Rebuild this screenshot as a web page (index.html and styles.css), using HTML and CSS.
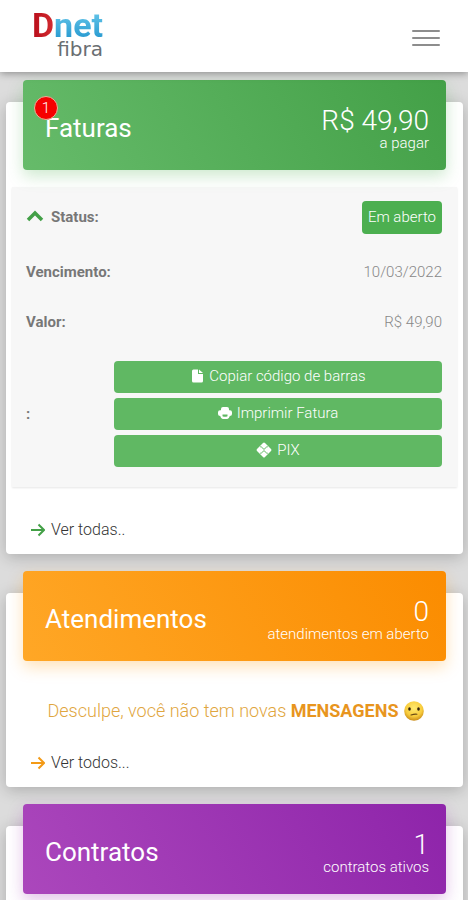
FILE: index.html
```html
<!DOCTYPE html>
<html lang="pt-BR">
<head>
<meta charset="utf-8">
<meta name="viewport" content="width=device-width, initial-scale=1">
<title>Dnet fibra</title>
<link rel="stylesheet" href="styles.css">
</head>
<body>
<header class="topbar">
  <a class="logo" href="#"><span class="logo-main"><span class="logo-d">D</span><span class="logo-net">net</span></span><span class="logo-sub">fibra</span></a>
  <button class="menu" type="button" aria-label="Menu"><span></span><span></span><span></span></button>
</header>
<main class="cards">
  <section class="card">
    <div class="card-head green">
      <div class="title-wrap"><span class="count">1</span><h2>Faturas</h2></div>
      <p class="summary"><span class="big">R$ 49,90</span><span class="small">a pagar</span></p>
    </div>
    <div class="panel">
      <table class="details">
        <tr class="first"><th scope="row"><svg class="chevron" viewBox="0 0 18 12" aria-hidden="true"><path d="M2 10 9 3l7 7"/></svg>Status:</th><td><span class="status">Em aberto</span></td></tr>
        <tr><th scope="row">Vencimento:</th><td>10/03/2022</td></tr>
        <tr><th scope="row">Valor:</th><td>R$ 49,90</td></tr>
        <tr><th scope="row">:</th><td>
          <div class="actions">
            <button type="button"><svg viewBox="0 0 14 14" aria-hidden="true"><path d="M2 2Q2 .5 3.500 .5H8V5h5v7q0 1.500-1.500 1.500h-8Q2 13.500 2 12z"/><path d="M9 .5 13 4H9z"/></svg>Copiar código de barras</button>
            <button type="button"><svg viewBox="0 0 14 14" aria-hidden="true"><path fill-rule="evenodd" d="M5 1h4q2 0 2 2v1.200h1q2 0 2 2V8q0 2-2.200 2-.8 3-2.500 3H4.700Q3 13 2.200 10 0 10 0 8V6.200q0-2 2-2h1V3q0-2 2-2zM4.500 8.500v1.700q2.500 1.300 5 0V8.500z"/></svg>Imprimir Fatura</button>
            <button type="button"><svg class="pix" viewBox="0 0 16 16" aria-hidden="true"><path d="M7 1Q8 0 9 1l6 6q1 1 0 2l-6 6q-1 1-2 0L1 9Q0 8 1 7z"/><path class="cut" d="M4.200 4.800h1L8 7.400l2.800-2.600h1M4.200 11.200h1L8 8.600l2.800 2.600h1"/></svg>PIX</button>
          </div>
        </td></tr>
      </table>
    </div>
    <a class="more green-link roomy" href="#"><svg viewBox="0 0 14 14" aria-hidden="true"><path d="M0 7h12.500M7.500 1.500 13 7l-5.500 5.500"/></svg>Ver todas..</a>
  </section>

  <section class="card">
    <div class="card-head orange">
      <h2>Atendimentos</h2>
      <p class="summary"><span class="big">0</span><span class="small">atendimentos em aberto</span></p>
    </div>
    <p class="empty"><span>Desculpe, você não tem novas <strong>MENSAGENS</strong></span>
      <svg viewBox="0 0 20 20" aria-hidden="true"><defs><radialGradient id="face" cx=".5" cy=".35" r=".65"><stop offset="0" stop-color="#ffea70"/><stop offset=".65" stop-color="#f8cc3c"/><stop offset="1" stop-color="#c98b18"/></radialGradient></defs><circle cx="10" cy="10" r="9.800" fill="url(#face)"/><ellipse cx="5.500" cy="8" rx="1.300" ry="1.800" fill="#33240f"/><ellipse cx="14.500" cy="8" rx="1.300" ry="1.800" fill="#33240f"/><path d="M7 14q3.500-1.200 6-.8" fill="none" stroke="#6b4a14" stroke-width="1.100" stroke-linecap="round"/></svg></p>
    <a class="more orange-link" href="#"><svg viewBox="0 0 14 14" aria-hidden="true"><path d="M0 7h12.500M7.500 1.500 13 7l-5.500 5.500"/></svg>Ver todos...</a>
  </section>

  <section class="card">
    <div class="card-head purple">
      <h2>Contratos</h2>
      <p class="summary"><span class="big">1</span><span class="small">contratos ativos</span></p>
    </div>
    <div class="blank"></div>
  </section>
</main>
</body>
</html>
```
FILE: styles.css
```css
* { box-sizing: border-box; }
html { scrollbar-width: none; }
body {
  margin: 0;
  background: #dcdcdc;
  color: #444;
  font-family: Roboto, "Liberation Sans", sans-serif;
  font-size: 15px;
  font-weight: 300;
  line-height: 20px;
}
h2, p { margin: 0; }
button { border: 0; font: inherit; cursor: pointer; }

.topbar {
  position: relative;
  z-index: 2;
  display: flex;
  align-items: center;
  justify-content: space-between;
  height: 72px;
  padding: 0 28px 0 32px;
  background: #fff;
  box-shadow: 0 1px 8px rgba(0, 0, 0, .4);
}
.logo { display: flex; flex-direction: column; margin-bottom: 4px; text-decoration: none; }
.logo-main { display: flex; font-size: 34px; font-weight: 700; line-height: 30px; }
.logo-d, .logo-net { color: transparent; background-clip: text; -webkit-background-clip: text; }
.logo-d { background-image: linear-gradient(90deg, #b80d19, #d32c31); }
.logo-net { background-image: linear-gradient(#68c8eb, #2598cf); }
.logo-sub {
  align-self: flex-end;
  color: #6a6e72;
  font: 20px/18px "DejaVu Sans", sans-serif;
}
.menu {
  display: flex;
  flex-direction: column;
  gap: 5px;
  margin-top: 4px;
  padding: 0;
  background: none;
}
.menu span { width: 28px; height: 2px; border-radius: 1px; background: #8d8d8d; }

.cards {
  display: flex;
  flex-direction: column;
  gap: 39px;
  padding: 30px 5px 0 6px;
}
.card {
  border-radius: 4px;
  background: #fff;
  box-shadow: 0 3px 16px rgba(0, 0, 0, .22);
}
.card-head {
  position: relative;
  display: flex;
  align-items: center;
  justify-content: space-between;
  height: 90px;
  margin: -22px 17px 0;
  padding: 10px 17px 4px 22px;
  border-radius: 4px;
  color: #fff;
}
.card-head h2 { font-size: 26px; font-weight: 400; line-height: 32px; }
.green { background: linear-gradient(60deg, #66bb6a, #43a047); box-shadow: 0 6px 16px rgba(76, 175, 80, .28); }
.orange { background: linear-gradient(60deg, #ffa726, #fb8c00); box-shadow: 0 6px 16px rgba(255, 152, 0, .28); }
.purple { background: linear-gradient(60deg, #ab47bc, #8e24aa); box-shadow: 0 6px 16px rgba(156, 39, 176, .28); }
.summary { display: flex; flex-direction: column; padding-top: 6px; text-align: right; }
.big { font-size: 28px; line-height: 24px; }
.small { font-size: 15px; line-height: 20px; }
.title-wrap { position: relative; }
.count {
  position: absolute;
  top: -16px;
  left: -11px;
  width: 24px;
  height: 24px;
  border: 1px solid #e8b39b;
  border-radius: 50%;
  background: #f60000;
  font-size: 15px;
  line-height: 22px;
  text-align: center;
}

.panel {
  margin: 17px 6px 0;
  padding-bottom: 6px;
  background: #f7f7f7;
  box-shadow: 0 1px 2px rgba(0, 0, 0, .1);
}
.details { width: 100%; border-collapse: collapse; }
.details tr { height: 50px; }
.details .first { height: 60px; }
.details th { width: 102px; padding: 0 0 0 14px; color: #777; font-weight: 700; text-align: left; white-space: nowrap; }
.details td { padding: 0 15px 0 0; color: #888; text-align: right; }
.chevron { width: 18px; height: 12px; margin-right: 7px; fill: none; stroke: #43a047; stroke-width: 3.5; }
.status {
  display: inline-block;
  padding: 6px;
  border-radius: 4px;
  background: #4caf50;
  color: #fff;
  line-height: 21px;
}
.actions { display: flex; flex-direction: column; gap: 5px; padding: 14px 0; }
.actions button {
  display: flex;
  align-items: center;
  justify-content: center;
  gap: 5px;
  height: 32px;
  padding: 0 6px 2px;
  border-radius: 4px;
  background: #60b863;
  color: #fff;
}
.actions svg { width: 14px; height: 14px; fill: #fff; }
.actions .pix { width: 16px; height: 16px; }
.actions .cut { fill: none; stroke: #60b863; stroke-width: 1; }

.more {
  display: flex;
  align-items: center;
  gap: 6px;
  padding: 0 25px 14px;
  color: #333;
  font-size: 16px;
  text-decoration: none;
}
.more.roomy { padding-top: 33px; }
.more svg { width: 14px; height: 14px; fill: none; stroke-width: 2; }
.green-link svg { stroke: #43a047; }
.orange-link svg { stroke: #f39a16; }
.empty {
  display: flex;
  align-items: center;
  justify-content: center;
  gap: 6px;
  padding: 38px 0 30px 3px;
  color: #dfa640;
  font-size: 18px;
  line-height: 24px;
}
.empty strong { color: #e8951e; font-weight: 700; }
.empty svg { width: 20px; height: 20px; }
.blank { height: 24px; }
```
